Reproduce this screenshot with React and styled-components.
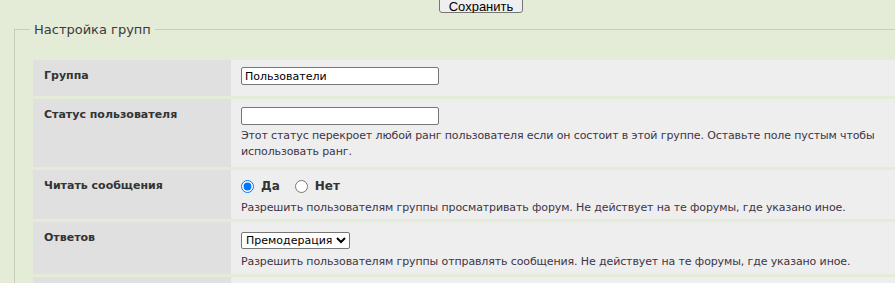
import styled, { createGlobalStyle } from "styled-components";

const GlobalStyle = createGlobalStyle`
  html, body {
    margin: 0;
    padding: 0;
    background: #e4ebd6;
    overflow: hidden;
  }
  body {
    font-family: "DejaVu Sans", Verdana, sans-serif;
    font-size: 11px;
    color: #333;
  }
`;

const TopBar = styled.div`
  height: 13px;
  overflow: hidden;
  display: flex;
  align-items: flex-end;
  padding-left: 439px;
`;

const SaveButton = styled.button`
  width: 84px;
  height: 16px;
  font-family: "Liberation Sans", Arial, sans-serif;
  font-size: 13px;
  color: #000;
  background: #efefef;
  border: 1px solid #767676;
  border-radius: 3px;
  padding: 2px 6px 0;
  line-height: 13px;
`;

const Fieldset = styled.fieldset`
  margin: 9px 0 0 14px;
  width: 960px;
  border: 1px solid #c7ccbd;
  border-right: none;
  padding: 23px 0 0 18px;
  box-sizing: border-box;
`;

const Legend = styled.legend`
  font-size: 13px;
  color: #3a3a40;
  padding: 0 4px;
  margin-left: -3px;
`;

const Rows = styled.div`
  display: flex;
  flex-direction: column;
  gap: 3px;
`;

const Row = styled.div`
  display: grid;
  grid-template-columns: 198px 1fr;
  min-height: ${(p) => p.$height}px;
`;

const Label = styled.div`
  background: #dfe0df;
  font-weight: bold;
  padding: 9px 11px;
  line-height: 14px;
`;

const Value = styled.div`
  background: #eeeeee;
  padding: ${(p) => p.$top || 7}px 10px 2px;
  display: flex;
  flex-direction: column;
  align-items: flex-start;
  gap: ${(p) => p.$gap || 5}px;
`;

const TextInput = styled.input`
  width: 198px;
  height: 18px;
  box-sizing: border-box;
  border: 1px solid #767676;
  border-radius: 2px;
  padding: 0 3px;
  font-family: "DejaVu Sans", Verdana, sans-serif;
  font-size: 11px;
  color: #000;
  background: #fff;
`;

const Hint = styled.div`
  line-height: 16px;
  max-width: 660px;
  letter-spacing: -0.12px;
  color: #3d3545;
`;

const RadioGroup = styled.div`
  display: flex;
  align-items: center;
  gap: 15px;
  height: 18px;
`;

const RadioLabel = styled.label`
  display: flex;
  align-items: center;
  gap: 7px;
  font-weight: bold;
  font-size: 12px;
  input {
    margin: 0;
    width: 13px;
    height: 13px;
  }
`;

const Select = styled.select`
  height: 17px;
  font-family: "DejaVu Sans", Verdana, sans-serif;
  font-size: 11px;
  color: #000;
  border: 1px solid #767676;
  border-radius: 2px;
  background: #fff;
  padding: 0;
`;

const App = () => {
  return (
    <>
      <GlobalStyle />
      <TopBar>
        <SaveButton>Сохранить</SaveButton>
      </TopBar>
      <Fieldset>
        <Legend>Настройка групп</Legend>
        <Rows>
          <Row $height={36}>
            <Label>Группа</Label>
            <Value>
              <TextInput defaultValue="Пользователи" />
            </Value>
          </Row>
          <Row $height={68}>
            <Label>Статус пользователя</Label>
            <Value $top={8} $gap={3}>
              <TextInput />
              <Hint>
                Этот статус перекроет любой ранг пользователя если он состоит в
                этой группе. Оставьте поле пустым чтобы использовать ранг.
              </Hint>
            </Value>
          </Row>
          <Row $height={49}>
            <Label>Читать сообщения</Label>
            <Value $top={7} $gap={5}>
              <RadioGroup>
                <RadioLabel>
                  <input type="radio" name="read" defaultChecked />
                  Да
                </RadioLabel>
                <RadioLabel>
                  <input type="radio" name="read" />
                  Нет
                </RadioLabel>
              </RadioGroup>
              <Hint>
                Разрешить пользователям группы просматривать форум. Не действует
                на те форумы, где указано иное.
              </Hint>
            </Value>
          </Row>
          <Row $height={52}>
            <Label>Ответов</Label>
            <Value $top={10} $gap={5}>
              <Select defaultValue="pre">
                <option value="pre">Премодерация</option>
                <option value="yes">Да</option>
                <option value="no">Нет</option>
              </Select>
              <Hint>
                Разрешить пользователям группы отправлять сообщения. Не действует
                на те форумы, где указано иное.
              </Hint>
            </Value>
          </Row>
          <Row $height={40}>
            <Label />
            <Value />
          </Row>
        </Rows>
      </Fieldset>
    </>
  );
};

export default App;
